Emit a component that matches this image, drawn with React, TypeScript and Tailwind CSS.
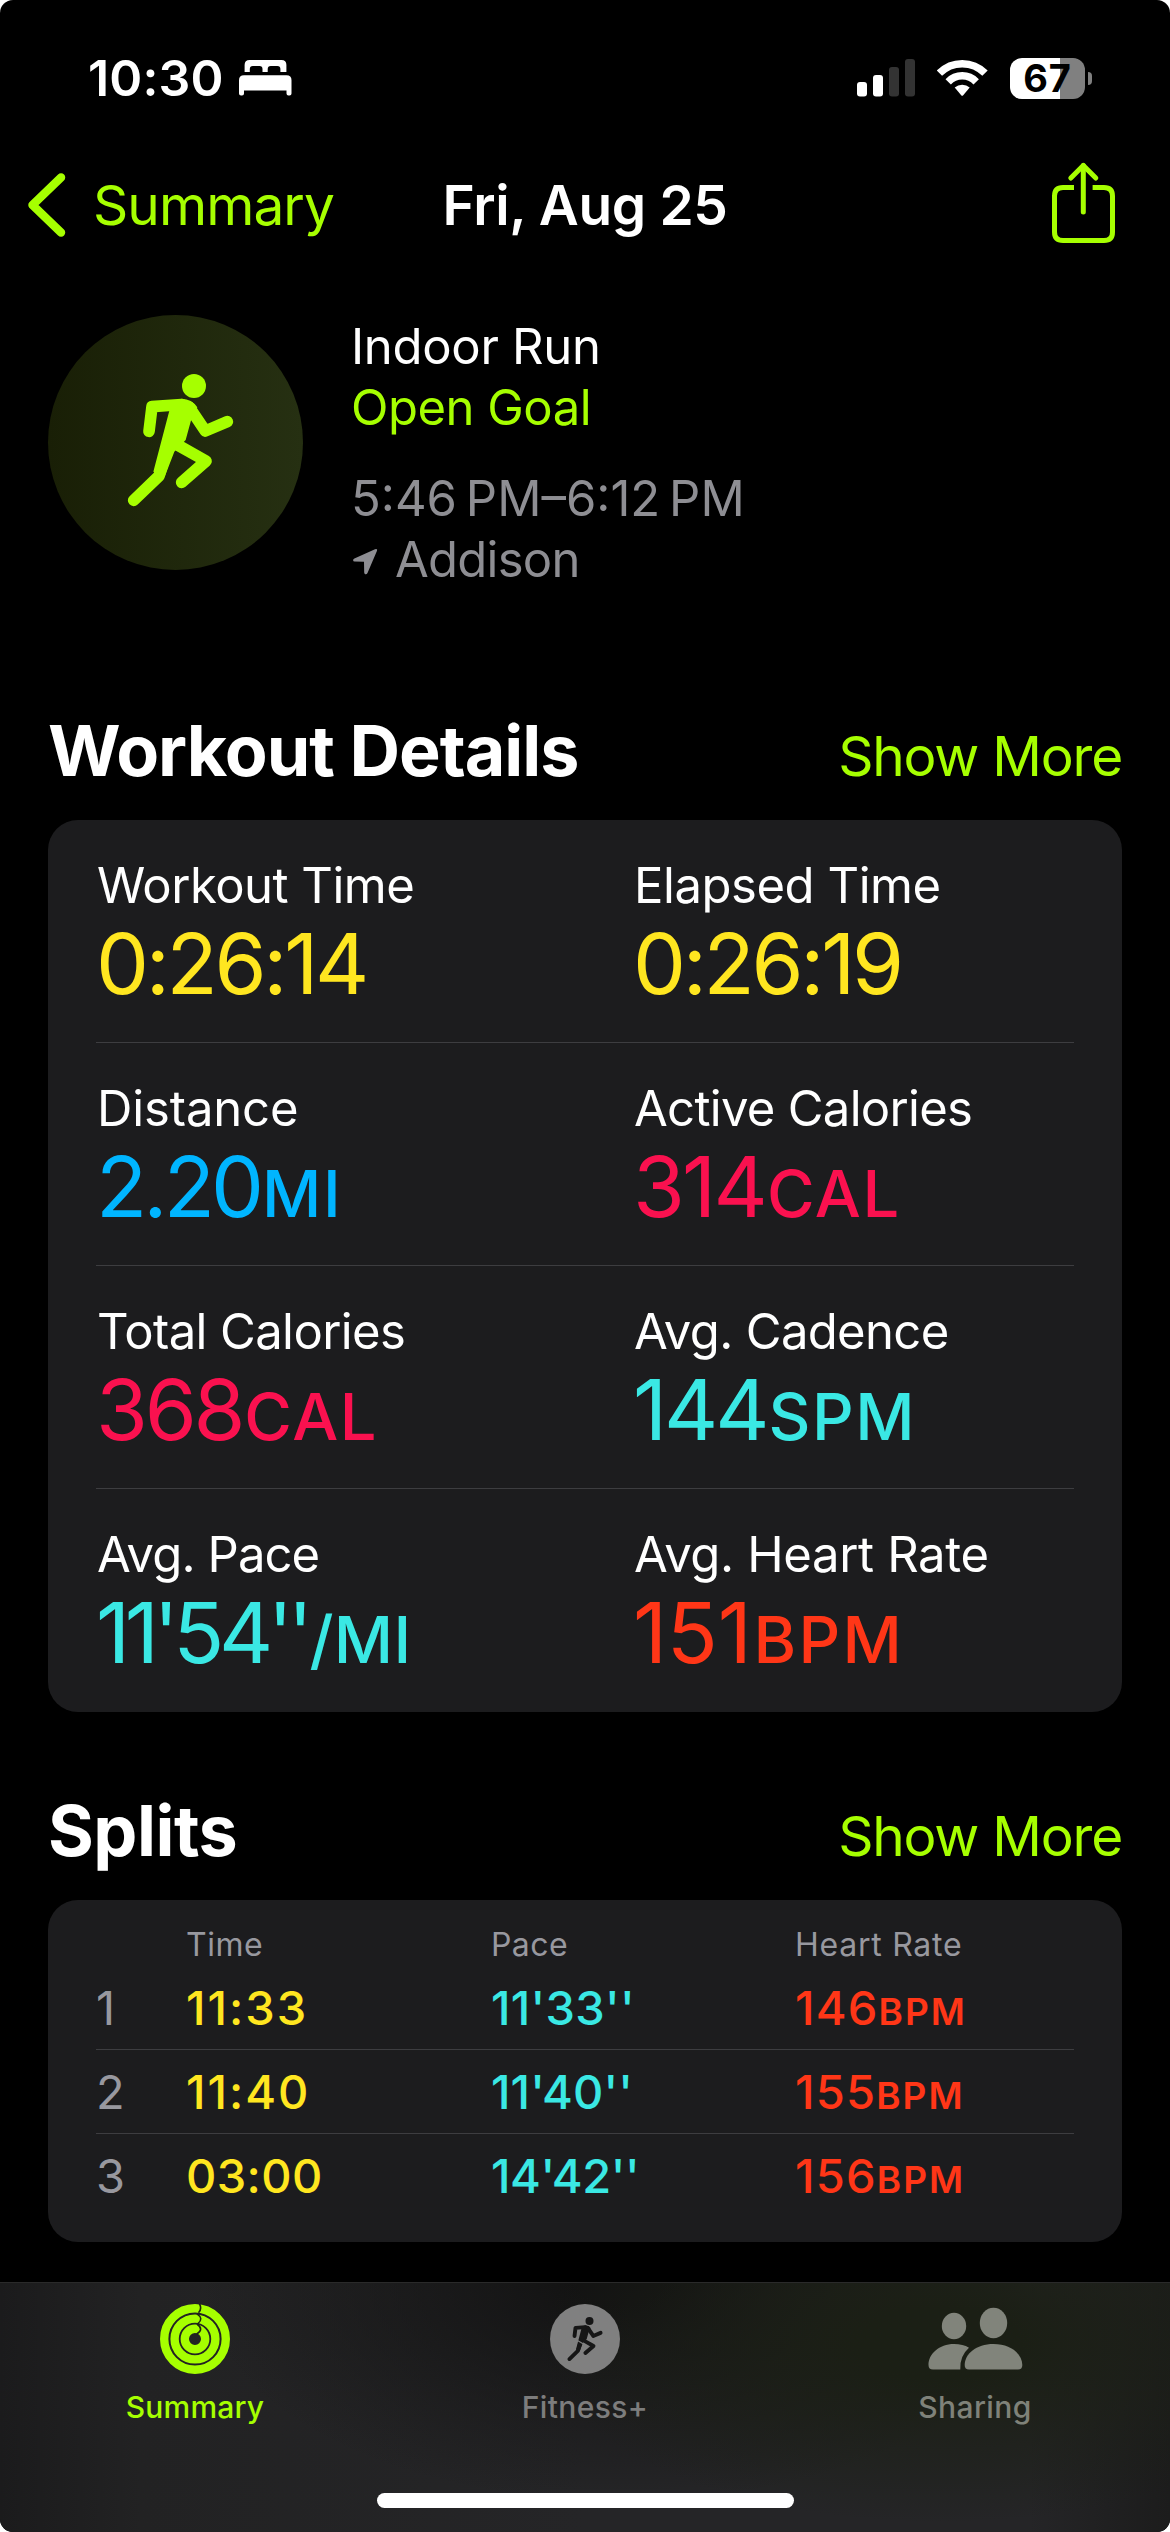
import React from 'react';

type Metric = {
  label: string;
  labelTracking: string;
  value: string;
  valueTracking: string;
  unit?: string;
  unitTracking?: string;
  color: string;
};

const METRICS: Metric[][] = [
  [
    { label: 'Workout Time', labelTracking: 'tracking-[-0.5px]', value: '0:26:14', valueTracking: 'tracking-[-3.3px]', color: 'text-[#ffe620]' },
    { label: 'Elapsed Time', labelTracking: 'tracking-[-0.45px]', value: '0:26:19', valueTracking: 'tracking-[-3.3px]', color: 'text-[#ffe620]' },
  ],
  [
    { label: 'Distance', labelTracking: 'tracking-[-0.12px]', value: '2.20', valueTracking: 'tracking-[-3.9px]', unit: 'MI', unitTracking: 'tracking-[1.5px]', color: 'text-[#00b5ff]' },
    { label: 'Active Calories', labelTracking: 'tracking-[-0.7px]', value: '314', valueTracking: 'tracking-[-2.8px]', unit: 'CAL', unitTracking: 'tracking-[1.6px]', color: 'text-[#fa114f]' },
  ],
  [
    { label: 'Total Calories', labelTracking: 'tracking-[-0.6px]', value: '368', valueTracking: 'tracking-[-3.2px]', unit: 'CAL', unitTracking: 'tracking-[1.6px]', color: 'text-[#fa114f]' },
    { label: 'Avg. Cadence', labelTracking: 'tracking-[-0.65px]', value: '144', valueTracking: 'tracking-[-3.1px]', unit: 'SPM', unitTracking: 'tracking-[1.6px]', color: 'text-[#3ae8e4]' },
  ],
  [
    { label: 'Avg. Pace', labelTracking: 'tracking-[-0.9px]', value: "11'54''", valueTracking: 'tracking-[-5.4px]', unit: '/MI', unitTracking: 'tracking-[0.4px]', color: 'text-[#3ae8e4]' },
    { label: 'Avg. Heart Rate', labelTracking: 'tracking-[-0.35px]', value: '151', valueTracking: 'tracking-[-0.3px]', unit: 'BPM', unitTracking: 'tracking-[2.3px]', color: 'text-[#ff3617]' },
  ],
];

const SPLITS = [
  { time: '11:33', timeTracking: 'tracking-[2px]', pace: "11'33''", paceTracking: 'tracking-[0.27px]', hr: '146' },
  { time: '11:40', timeTracking: 'tracking-[2px]', pace: "11'40''", paceTracking: 'tracking-[0.1px]', hr: '155' },
  { time: '03:00', timeTracking: 'tracking-[0.4px]', pace: "14'42''", paceTracking: 'tracking-[-0.44px]', hr: '156' },
];

const BedIcon = () => (
  <svg width="53" height="36" viewBox="0 0 53 36" fill="white">
    <path d="M5.6 12V5q0-5 5-5H42.4q5 0 5 5V12H41.4V9q0-3-3-3H31.7q-3 0-3 3V12H23.5V9q0-3-3-3H13.8q-3 0-3 3V12Z" />
    <path d="M0 33.5V20.3q0-5 5-5H47.5q5 0 5 5V33.5q0 2-2 2h-1q-2 0-2-2V30.6H5V33.5q0 2-2 2H2q-2 0-2-2Z" />
  </svg>
);

const SignalIcon = () => (
  <svg width="59" height="38" viewBox="0 0 59 38">
    <rect x="0" y="23" width="10" height="14.5" rx="3" fill="white" />
    <rect x="16" y="16" width="10" height="21.5" rx="3" fill="white" />
    <rect x="32" y="8" width="10" height="29.5" rx="3" fill="#333333" />
    <rect x="48" y="0" width="10" height="37.5" rx="3" fill="#333333" />
  </svg>
);

const WifiIcon = () => (
  <svg width="51" height="38" viewBox="0 0 51 38" fill="none" stroke="white" strokeWidth="7.5">
    <path d="M2.4 14.2A32 32 0 0 1 48 14.2" />
    <path d="M11.2 22.8A19.5 19.5 0 0 1 39.2 22.8" />
    <path d="M17.7 28.6A11 11 0 0 1 32.7 28.6L26.2 36.2Q25.2 37.2 24.2 36.2Z" fill="white" stroke="none" />
  </svg>
);

// Shared figure, drawn in the 765-unit box of the workout badge
const RunnerFigure = () => (
  <g fill="currentColor" stroke="currentColor" strokeLinecap="round" strokeLinejoin="round">
    <circle cx="582" cy="288" r="36" stroke="none" />
    <path d="M508 362L500 345L545 326Q576 327 592 352L574 388L557 450L523 485L494 560L460 545Z" stroke="none" />
    <g fill="none" strokeWidth="35">
      <path d="M545 343.500L456 350L447 424" />
      <path d="M568 352L616 423L682 395" />
      <path d="M536 467L618 513L545 577" />
      <path d="M506 465L477 558L401 631" />
    </g>
  </g>
);

const RingsIcon = () => (
  <svg width="70" height="70" viewBox="0 0 70 70" fill="none">
    <g stroke="#a6ff00" strokeWidth="8.4">
      <circle cx="35" cy="35" r="30.800" />
      <circle cx="35" cy="35" r="20.400" />
      <circle cx="35" cy="35" r="10.200" />
    </g>
    <g stroke="#1e2410" strokeWidth="1.6">
      <path d="M39 -1Q42.500 4.500 38.500 8.800" />
      <path d="M37 9.800Q44 14.500 38 19.500" />
      <path d="M37 20Q44.500 25.500 36.500 30.200" />
    </g>
  </svg>
);

const FitnessIcon = () => (
  <svg width="70" height="70" viewBox="0 0 70 70">
    <circle cx="35" cy="35" r="35" fill="#808080" />
    <g transform="translate(-25.100 -15) scale(0.111)" className="text-[#161616]">
      <RunnerFigure />
    </g>
    <path d="M27.500 36.500L36 41.500" stroke="#808080" strokeWidth="1.3" />
  </svg>
);

const SharingIcon = () => (
  <svg width="95" height="70" viewBox="0 0 95 70" fill="#81847b">
    <ellipse cx="26" cy="22" rx="12.200" ry="13.200" />
    <ellipse cx="65.500" cy="19" rx="13.700" ry="15.200" />
    <path d="M5 65.500Q0.500 65.500 0.500 61C0.500 50 11 40 26 40Q35 40 41 43.700Q31.500 52 32.300 65.500Z" />
    <path d="M41 65.500Q36.700 65.500 36.700 61C36.700 50 48 40 65.500 40S94.300 50 94.300 61Q94.300 65.500 90 65.500Z" />
  </svg>
);

const SectionHeading = ({ title, tracking }: { title: string; tracking: string }) => (
  <div className="flex h-[84px] items-baseline justify-between px-12 leading-[84px]">
    <h2 className={`text-[70px] font-bold ${tracking}`}>{title}</h2>
    <button className="text-[55px] tracking-[-1.22px] text-[#a6ff00]">Show More</button>
  </div>
);

const MetricCell = ({ metric }: { metric: Metric }) => (
  <div className="px-12 pt-9">
    <div className={`pl-px text-[49px] leading-[60px] ${metric.labelTracking}`}>{metric.label}</div>
    <div className={`mt-1.5 text-[84px] leading-[84px] whitespace-nowrap ${metric.color}`}>
      <span className={metric.valueTracking}>{metric.value}</span>
      {metric.unit && (
        <span className={`ml-0.5 text-[65px] leading-none font-medium ${metric.unitTracking}`}>{metric.unit}</span>
      )}
    </div>
  </div>
);

const TabItem = ({ icon, label, className }: { icon: React.ReactNode; label: string; className: string }) => (
  <div className={`flex flex-col items-center pt-[21px] text-[30px] leading-[36px] font-medium ${className}`}>
    {icon}
    <span className="mt-[15px]">{label}</span>
  </div>
);

const App: React.FC = () => {
  return (
    <div className="w-[1170px] bg-white">
      <div className="flex h-[2532px] flex-col overflow-hidden rounded-[13px] bg-black font-['Inter',sans-serif] text-white">
        {/* Status bar */}
        <div className="flex h-[156px] items-center justify-between pr-[78px] pl-[88px]">
          <div className="flex items-center gap-[15px]">
            <span className="text-[50px] leading-[60px] font-semibold tracking-[0.16px]">10:30</span>
            <BedIcon />
          </div>
          <div className="flex items-center">
            <SignalIcon />
            <div className="ml-[21px]">
              <WifiIcon />
            </div>
            <div className="ml-[22px] flex h-[41px] w-[75px] items-center justify-center rounded-[12px] bg-[linear-gradient(to_right,#ffffff_67%,#808080_67%)] text-[38px] leading-none font-bold tracking-[0.8px] text-black">
              67
            </div>
            <div className="ml-[3px] h-[13px] w-[4px] rounded-r-full bg-[#808080]" />
          </div>
        </div>

        {/* Navigation bar */}
        <div className="grid h-[98px] grid-cols-[1fr_auto_1fr] items-center px-[26px] text-[55px] leading-[66px]">
          <button className="flex items-center gap-[25px] tracking-[-0.94px] text-[#a6ff00]">
            <svg width="42" height="66" viewBox="0 0 42 66" fill="none" stroke="currentColor" strokeWidth="8.5" strokeLinecap="round" strokeLinejoin="round">
              <path d="M35 5.500L6.500 33L35 60.500" />
            </svg>
            Summary
          </button>
          <h1 className="font-semibold tracking-[-0.34px]">Fri, Aug 25</h1>
          <svg className="mr-[28px] mb-1 justify-self-end" width="68" height="84" viewBox="0 0 68 84" fill="none" stroke="#a6ff00" strokeWidth="5" strokeLinecap="round" strokeLinejoin="round">
            <path d="M35.300 4.500V51" />
            <path d="M22.800 17L35.300 4.500L47.800 17" />
            <path d="M26 26.500H15Q6.500 26.500 6.500 35V71Q6.500 79.500 15 79.500H56Q64.500 79.500 64.500 71V35Q64.500 26.500 56 26.500H44.600" strokeLinecap="butt" />
          </svg>
        </div>

        {/* Workout summary */}
        <div className="mt-[61px] flex gap-12 px-12">
          <div className="size-[255px] rounded-full bg-linear-to-r from-[#191f06] to-[#263012]">
            <svg width="255" height="255" viewBox="144 75 765 765" className="text-[#a6ff00]">
              <RunnerFigure />
            </svg>
          </div>
          <div className="h-[275px] pt-px text-[49px] leading-[61px] text-[#8e8e93]">
            <div className="tracking-[-0.29px] text-white">Indoor Run</div>
            <div className="tracking-[-0.5px] text-[#a6ff00]">Open Goal</div>
            <div className="mt-[30px]">{'5:46\u202fPM–6:12\u202fPM'}</div>
            <div className="flex items-center tracking-[-0.74px]">
              <svg className="mt-1 mr-[17px] ml-[2px]" width="25" height="27" viewBox="0 0 25 27" fill="currentColor">
                <path d="M22 1.200Q24.800 0.200 24 2.800L14.500 25Q13.700 26.600 12.200 26.200Q11.200 25.900 11.200 24.500L11 13.800L1.500 13.500Q0.200 13.400 0.100 12.200Q0.100 11.100 1.400 10.500Z" />
              </svg>
              Addison
            </div>
          </div>
        </div>

        {/* Workout details */}
        <div className="mt-[119px]">
          <SectionHeading title="Workout Details" tracking="tracking-[-1px]" />
          <div className="mx-12 mt-[27px] rounded-[30px] bg-[#1c1c1e]">
            {METRICS.map((row, i) => (
              <div key={i} className="h-[223px]">
                <div className="grid h-[222px] grid-cols-2">
                  {row.map((metric) => (
                    <MetricCell key={metric.label} metric={metric} />
                  ))}
                </div>
                {i < METRICS.length - 1 && <div className="mx-12 h-px bg-[#3d3d40]" />}
              </div>
            ))}
          </div>
        </div>

        {/* Splits */}
        <div className="mt-[77px]">
          <SectionHeading title="Splits" tracking="tracking-[-0.5px]" />
          <div className="mx-12 mt-[27px] rounded-[30px] bg-[#1c1c1e] px-12 pb-6">
            <div className="grid h-[66px] grid-cols-[90px_305px_304px_1fr] pt-[23px] text-[32px] leading-[43px] text-[#98989f]">
              <span />
              <span className="tracking-[0.5px]">Time</span>
              <span className="tracking-[0.4px]">Pace</span>
              <span className="tracking-[0.74px]">Heart Rate</span>
            </div>
            {SPLITS.map((split, i) => (
              <div
                key={split.time}
                className="grid h-[84px] grid-cols-[90px_305px_304px_1fr] border-b border-[#3d3d40] text-[47px] leading-[83px] font-medium last:border-transparent"
              >
                <span className="font-normal text-[#98989f]">{i + 1}</span>
                <span className={`text-[#ffe620] ${split.timeTracking}`}>{split.time}</span>
                <span className={`text-[#3ae8e4] ${split.paceTracking}`}>{split.pace}</span>
                <span className="text-[#ff3617]">
                  <span className="tracking-[1.2px]">{split.hr}</span>
                  <span className="text-[37px] leading-none font-semibold tracking-[2px]">BPM</span>
                </span>
              </div>
            ))}
          </div>
        </div>

        {/* Tab bar */}
        <div className="mt-auto h-[250px] border-t border-[#2a2a2a] bg-[radial-gradient(ellipse_400px_180px_at_940px_60px,#1b1f15_20%,transparent_100%),radial-gradient(ellipse_420px_220px_at_620px_0px,#131313_10%,transparent_100%),linear-gradient(to_right,#1b1b1c_0%,#222223_12%,#252527_50%,#252527_88%,#1c1c1c_100%)]">
          <div className="grid h-[210px] grid-cols-3">
            <TabItem icon={<RingsIcon />} label="Summary" className="tracking-[0.2px] text-[#a6ff00]" />
            <TabItem icon={<FitnessIcon />} label="Fitness+" className="tracking-[0.37px] text-[#7d7d7d]" />
            <TabItem icon={<SharingIcon />} label="Sharing" className="tracking-[0.41px] text-[#7f8279]" />
          </div>
          <div className="mx-auto h-[15px] w-[417px] rounded-full bg-white" />
        </div>
      </div>
    </div>
  );
};

export default App;
